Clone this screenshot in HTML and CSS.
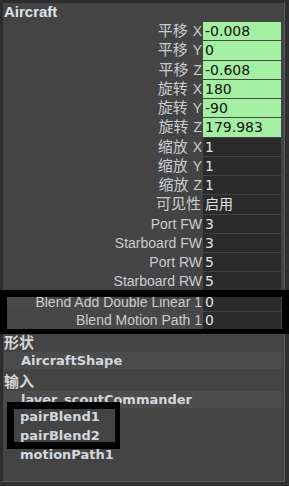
FILE: index.html
```
<!DOCTYPE html>
<html lang="zh-CN">

<head>
    <meta charset="UTF-8">
    <title>Aircraft</title>
    <link rel="stylesheet" href="styles.css">
</head>

<body>
    <div class="panel">
        <div class="title">Aircraft</div>
        <div class="attrs">
            <div class="row"><span class="label"><span class="cn">平移</span> X</span><span class="field keyed">-0.008</span></div>
            <div class="row"><span class="label"><span class="cn">平移</span> Y</span><span class="field keyed">0</span></div>
            <div class="row"><span class="label"><span class="cn">平移</span> Z</span><span class="field keyed">-0.608</span></div>
            <div class="row"><span class="label"><span class="cn">旋转</span> X</span><span class="field keyed">180</span></div>
            <div class="row"><span class="label"><span class="cn">旋转</span> Y</span><span class="field keyed">-90</span></div>
            <div class="row"><span class="label"><span class="cn">旋转</span> Z</span><span class="field keyed">179.983</span></div>
            <div class="row"><span class="label"><span class="cn">缩放</span> X</span><span class="field">1</span></div>
            <div class="row"><span class="label"><span class="cn">缩放</span> Y</span><span class="field">1</span></div>
            <div class="row"><span class="label"><span class="cn">缩放</span> Z</span><span class="field">1</span></div>
            <div class="row"><span class="label"><span class="cn">可见性</span></span><span class="field"><span class="cn">启用</span></span></div>
            <div class="row"><span class="label">Port FW</span><span class="field">3</span></div>
            <div class="row"><span class="label">Starboard FW</span><span class="field">3</span></div>
            <div class="row"><span class="label">Port RW</span><span class="field">5</span></div>
            <div class="row"><span class="label">Starboard RW</span><span class="field">5</span></div>
            <div class="row blend first"><span class="label">Blend Add Double Linear 1</span><span class="field">0</span></div>
            <div class="row blend"><span class="label">Blend Motion Path 1</span><span class="field">0</span></div>
        </div>
        <div class="section">形状</div>
        <div class="node band">AircraftShape</div>
        <div class="section">输入</div>
        <div class="node band">layer_scoutCommander</div>
        <div class="node">pairBlend1</div>
        <div class="node">pairBlend2</div>
        <div class="node">motionPath1</div>

        <!-- 标注框 -->
        <div class="mark mark-blend"></div>
        <div class="mark mark-pair"></div>
    </div>
</body>

</html>
```

FILE: styles.css
```
body {
    margin: 0;
    width: 289px;
    height: 486px;
    background: #303030;
    font-family: "DejaVu Sans", "Noto Sans CJK SC", sans-serif;
    font-size: 13px;
    overflow: hidden;
}

.panel {
    position: relative;
    box-sizing: border-box;
    width: 285px;
    height: 482px;
    background: #444;
    border-top: 3px solid #2d2d2d;
    border-left: 3px solid #2d2d2d;
    border-right: 1px solid #5a5a5a;
    border-bottom: 1px solid #5a5a5a;
    padding-right: 3px;
    color: #c8c8c8;
}

.title {
    height: 19px;
    line-height: 17px;
    padding-left: 1px;
    font-family: "Liberation Sans", sans-serif;
    font-size: 15px;
    font-weight: bold;
    color: #dde4ea;
}

.attrs {
    display: flex;
    flex-direction: column;
    gap: 1px;
}

.row {
    display: flex;
    height: 18.25px;
    line-height: 18px;
}

.label {
    flex: 1;
    text-align: right;
    padding-right: 1px;
    white-space: nowrap;
    font-family: "Liberation Sans", "Noto Sans CJK SC", sans-serif;
    font-size: 14px;
    color: #c9cdd2;
}

.cn {
    font-family: "Noto Sans CJK SC", sans-serif;
    font-size: 15px;
    line-height: 1;
    margin-right: 1px;
}

.field {
    width: 76px;
    padding-left: 2px;
    background: #2b2b2b;
    color: #dfe3e8;
    font-size: 14px;
    white-space: nowrap;
}

.field .cn {
    font-size: 14px;
}

.field.keyed {
    background: #a3f0a3;
    color: #101010;
}

.blend {
    height: 17.5px;
    line-height: 17px;
}

.blend.first {
    margin-top: 2px;
}

.blend .label {
    background: #484848;
}

.section {
    height: 18px;
    line-height: 18px;
    margin-top: 4px;
    padding-left: 1px;
    font-size: 15px;
    font-weight: bold;
    color: #d4d4d4;
}

.node {
    height: 19px;
    line-height: 18px;
    padding-left: 17px;
    font-weight: bold;
    color: #d2d8de;
}

.band {
    background: #4c4c4c;
    margin-left: 1px;
    height: 17px;
    line-height: 17px;
}

.mark {
    position: absolute;
    box-sizing: border-box;
    border: 6px solid #000;
}

.mark-blend {
    left: -3px;
    top: 287px;
    width: 290px;
    height: 44px;
    border-width: 7px 8px 5px 7px;
}

.mark-pair {
    left: 4px;
    top: 399px;
    width: 113px;
    height: 47px;
    border-width: 7px 5px 7px 7px;
}
```
